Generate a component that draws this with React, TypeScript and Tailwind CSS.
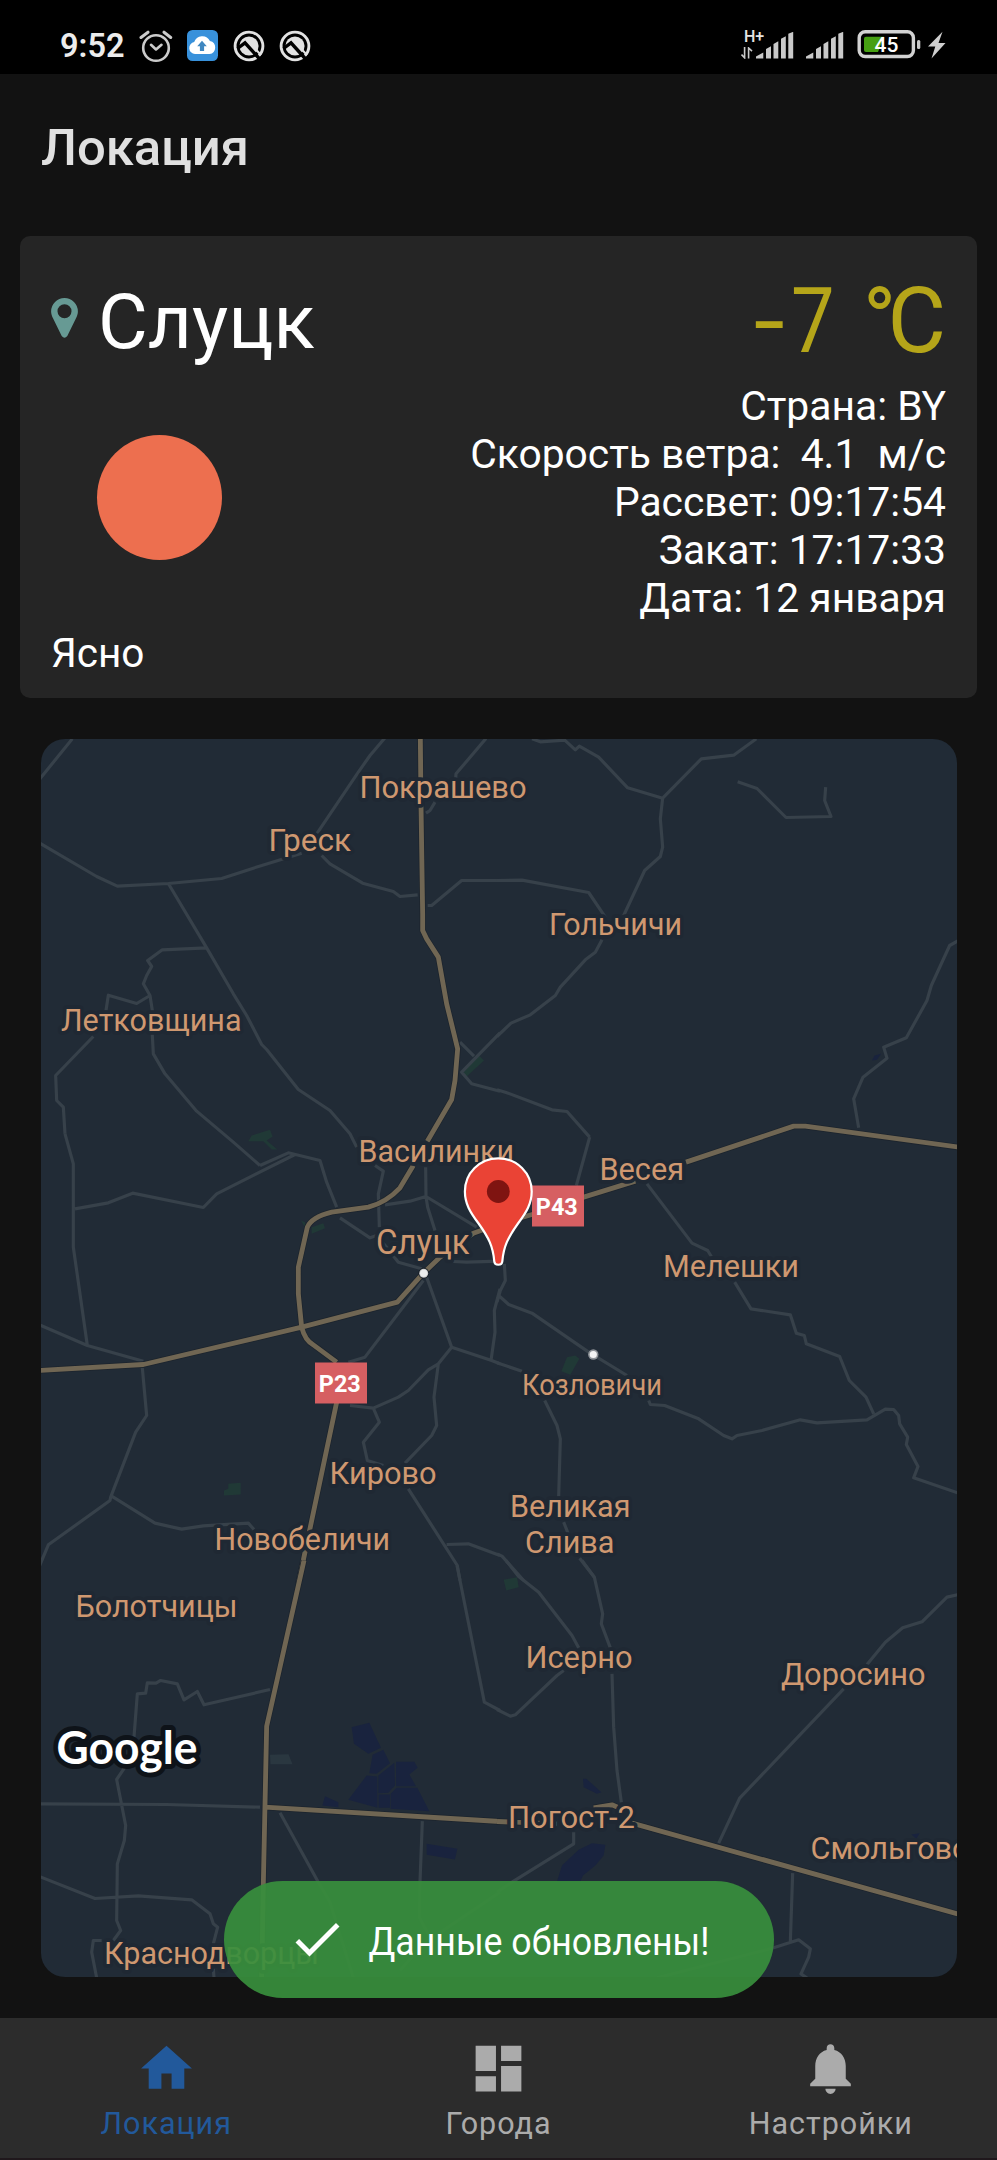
import React from "react";

const BG = "#212b36";

type Tile = {
  x: number;
  y: number;
  roads: string;
  highways?: string;
  parks?: string;
  water?: string;
};

/* Map geometry, split in tiles; each tile uses thirds of a pixel as its unit. */
const TILES: Tile[] = [
  {
    x: 0,
    y: 720,
    roads:
      "M217 55L118 177M118 367L290 468 352 497 505 489 665 474 760 443 905 398 M1155 52L1110 105 1075 155 950 340M965 405L990 430 1088 488 1180 513 1200 528 1253 523M1458 54L1368 160 1365 200M1305 245L1290 270 1278 278M1283 555L1295 555 1385 480 1500 480M505 489L620 682 700 820 740 885 785 972 800 987 895 1107 990 1170 1050 1240 1070 1280M620 682L487 688 443 720 455 738 440 765 430 790 450 825 457 870 457 945 460 1000 495 1060 590 1172 700 1265 780 1335M450 825L410 849 325 824 318 870M280 948L167 1065 170 1140 190 1160 195 1240M1500 937L1385 1055 1415 1090 1500 1112M1380 965L1422 1007",
    highways:
      "M1261 50L1263 250 1268 580 1268 630 1280 655 1315 710 1340 850 1373 985 1365 1080 1355 1137 1282 1262",
    parks:
      "M1435 1003L1452 1020 1400 1068 1390 1055ZM745 1262L755 1245 810 1228 818 1248 800 1260 832 1287 815 1287 790 1262Z",
  },
  {
    x: 497,
    y: 720,
    roads:
      "M105 55L130 64 203 59 235 88 247 77 305 110 392 202 497 233 613 115 710 104 778 55M497 233L490 295 497 380 490 408 443 450 380 585M315 658L295 695 265 718 190 800 175 825 100 883 42 908 0 948M0 480L75 479 275 516 325 590M722 184L780 204 867 291 1002 288 983 240 986 200M1385 660L1358 675 1303 795 1290 840 1228 952 1160 980 1170 1013 1098 1070 1070 1135 1085 1222M0 1108L25 1115 165 1168 210 1173 278 1250",
    highways: "M567 1325L890 1217 925 1217 1385 1280",
    water: "M1125 1020L1133 1005 1152 1000 1140 1018Z",
  },
  {
    x: 0,
    y: 1130,
    roads:
      "M195 10L220 100 220 350 262 645M118 583L262 645 430 692M427 712L440 855 407 905 332 1100 330 1110 145 1243 118 1308M225 235L325 217 398 188 610 231 650 190 885 72M780 105L865 67 960 90 980 155 1010 230M1020 262L1110 322 1130 315 1160 350 1195 395 1265 415M1125 105L1150 122 1135 190 1138 290M1155 223L1230 212 1278 198 1430 290M1277 110L1278 198 1283 230 1305 300M1360 393L1400 395 1500 392M1270 450L1095 680 1045 695M1280 440L1355 650 1475 690 1500 700M1355 650L1315 700 1285 718 1225 780 1195 800 1120 833 1050 825M1120 833L1138 875 1090 935 1102 990 1150 1005M1315 700L1302 800 1310 885 1295 915 1215 998M1500 475L1483 540 1485 605 1473 690M335 1097L465 1178 545 1196 610 1186 745 1178 762 1197M1225 1075L1372 1305 1380 1350M1340 1242L1405 1240 1500 1275",
    highways:
      "M118 720L430 702 905 590 1192 515 1270 428 1320 380 1420 308 1500 280M1240 105L1200 172Q1160 215 1105 230L995 245Q935 260 922 290L895 410 895 490 905 590Q915 630 940 643L1010 695M1010 815L895 1360",
    parks:
      "M903 270L915 275 920 300ZM935 290L970 278 975 293 935 310ZM672 1080L685 1075V1060L722 1057V1092L672 1095Z",
  },
  {
    x: 497,
    y: 1130,
    roads:
      "M278 20L238 165M450 160L585 338 632 360 643 378M713 455L762 535 880 553 898 608 922 615 928 640 1028 678 1057 750 1107 800 1130 850M22 400L25 450 10 480 0 515M5 495L35 522 105 548 275 665 390 735M455 810L460 822 503 825 605 865 680 915 705 925 720 915 795 900 910 868 960 877 1110 868 1165 836 1190 837 1205 855 1208 880 1232 920 1228 942 1263 1008 1250 1042 1385 1088M0 697L75 722M143 810L180 885 190 925 185 1098M200 1175L213 1208M248 1283L292 1340M0 1270L15 1277 80 1350",
    highways: "M0 283L105 252 260 200 415 152",
    parks: "M210 680L235 675 247 685 220 733 193 722Z",
  },
  {
    x: 0,
    y: 1560,
    roads:
      "M1371 15L1453 425 1500 450M810 387L612 433 592 393 552 418 532 370 482 360 468 368 442 367 437 398 412 400 402 530M375 620L350 657 377 795 373 840 352 910 350 1080 362 1110 340 1140M305 1140L280 1140 275 1175 290 1252M118 730L500 732 780 740M118 948L285 1014 415 1006 575 1018 630 1060 640 1090 653 1100 640 1150M640 1225L642 1252M840 757L955 965 990 1025 1060 1252M1267 782L1260 965 1258 1070 1300 1150M1500 995L1270 1150 1200 1230",
    highways: "M912 0L800 497 790 970 785 1252M795 740L1500 783",
    water:
      "M1055 500L1108 487 1143 562 1105 580 1062 550ZM1118 583L1150 568 1170 608 1130 640 1108 638ZM1100 645L1132 648 1132 742 1045 718ZM1135 645L1183 607 1185 675 1165 697 1135 698ZM1188 604H1243L1253 622 1228 642 1248 677 1188 677ZM1190 682H1252L1288 752 1172 745 1172 700ZM1136 702H1170V742H1136ZM975 707L1015 725 1015 740 967 735ZM1280 850L1372 865 1365 897 1280 883Z",
  },
  {
    x: 497,
    y: 1560,
    roads:
      "M27 0L65 48 125 95 225 225 245 262M200 330L180 345 55 463 40 467 0 447M255 0L292 50 317 160 313 190 340 262M345 340L350 500 360 630 373 725M1385 102L1350 110 1275 184 1217 202 1165 245 1110 312M1040 385L728 713 665 848M887 938L880 1145M830 1162L905 1138 940 1165 935 1190 912 1240 932 1254M830 1162L480 1252M230 815L230 850 45 965 0 995",
    highways: "M0 783L180 790M290 742L345 733 362 740M405 788L1385 1061",
    parks: "M20 58L60 50 65 80 28 90Z",
    water:
      "M258 655L268 655 313 695 300 700 260 680ZM180 963L195 915 245 868 285 848 325 853 320 885 295 915 258 945 250 963ZM1243 822L1268 818 1258 835Z",
  },
];

/* text, left edge, right edge, baseline, size */
const LABELS: [string, number, number, number, number][] = [
  ["Покрашево", 361, 525.5, 798.3, 32],
  ["Греск", 270, 350, 851.7, 32],
  ["Гольчичи", 550.5, 681, 935.7, 32],
  ["Летковщина", 62.5, 240.5, 1031.7, 32],
  ["Василинки", 360, 513, 1162.7, 32],
  ["Весея", 601, 683, 1180.3, 32],
  ["Слуцк", 377.5, 468.5, 1254, 34.5],
  ["Мелешки", 664.5, 798, 1277.3, 32],
  ["Козловичи", 523.5, 661, 1395.7, 30],
  ["Кирово", 331, 435.5, 1484, 32],
  ["Новобеличи", 216, 389, 1550.7, 32],
  ["Великая", 511.5, 629.5, 1517.7, 32],
  ["Слива", 526.5, 613.5, 1553.5, 32],
  ["Болотчицы", 77, 236.5, 1617.3, 32],
  ["Исерно", 527, 631.5, 1668.3, 32],
  ["Доросино", 782.5, 924.5, 1685, 32],
  ["Погост-2", 509.5, 634, 1828.3, 32],
  ["Смольгово", 812, 968.5, 1859.3, 32],
  ["Краснодворцы", 105.5, 318, 1964, 32],
];

function RoadShield({ x, y, text }: { x: number; y: number; text: string }) {
  return (
    <g>
      <rect x={x} y={y} width="52" height="41" fill="#d65f62" />
      <text x={x + 3.8} y={y + 29.3} fontSize="24.5" fontWeight="700" fill="#fff" textLength="42" lengthAdjust="spacingAndGlyphs">
        {text}
      </text>
    </g>
  );
}

function CityMap() {
  return (
    <svg viewBox="41 738.5 915.5 1238.5" className="block h-full w-full font-[Roboto,sans-serif]">
      <defs>
        <radialGradient id="dot">
          <stop offset="0.7" stopColor="#ececec" />
          <stop offset="1" stopColor="#b8b8b8" />
        </radialGradient>
      </defs>
      <rect x="41" y="738" width="916" height="1240" fill={BG} />
      <path d="M270 1754.3l18.5-.6 4 10h-22z" fill="#2a3740" />
      {TILES.map((t, i) => (
        <g key={i} transform={`translate(${t.x} ${t.y}) scale(0.33333)`}>
          {t.parks && <path d={t.parks} fill="#203936" />}
          {t.water && <path d={t.water} fill="#19233e" />}
          <path d={t.roads} fill="none" stroke="#37414a" strokeWidth="9.5" strokeLinejoin="round" />
        </g>
      ))}
      {TILES.map((t, i) => (
        <g key={i} transform={`translate(${t.x} ${t.y}) scale(0.33333)`}>
          <path d={t.highways} fill="none" stroke="#1c242d" strokeWidth="19" strokeLinejoin="round" />
          <path d={t.highways} fill="none" stroke="#706653" strokeWidth="14.5" strokeLinejoin="round" />
        </g>
      ))}
      <circle cx="423.7" cy="1272.7" r="5.4" fill="#161d26" />
      <circle cx="423.7" cy="1272.7" r="4.5" fill="url(#dot)" />
      <circle cx="593.3" cy="1354" r="5.2" fill="#8e9297" />
      <circle cx="593.3" cy="1354" r="3.6" fill="#f4f4f4" />
      {LABELS.map(([text, x1, x2, y, size]) => (
        <text
          key={text}
          x={x1 - 1.5}
          y={y - 0.8}
          fontSize={size}
          textLength={x2 - x1 + 2.5}
          lengthAdjust="spacingAndGlyphs"
          fill="#cf9870"
          stroke="#1f2833"
          strokeWidth="7.5"
          strokeLinejoin="round"
          paintOrder="stroke"
        >
          {text}
        </text>
      ))}
      <RoadShield x={315} y={1362} text="P23" />
      <RoadShield x={532} y={1185} text="P43" />
      <path
        d="M498.3 1157.8C517 1157.8 531.7 1172.5 531.7 1191C531.7 1203 526.5 1211.5 518 1223C508 1237 503.5 1246 502.3 1261C502 1265.3 494.6 1265.3 494.3 1261C493.1 1246 488.6 1237 478.6 1223C470 1211.5 464.9 1203 464.9 1191C464.9 1172.5 479.6 1157.8 498.3 1157.8Z"
        fill="#ea4335"
        stroke="#fff"
        strokeWidth="2.2"
      />
      <circle cx="498.3" cy="1191" r="11.4" fill="#7f1411" />
      <text
        x="56.5"
        y="1763"
        fontSize="46"
        fontWeight="700"
        textLength="141"
        lengthAdjust="spacingAndGlyphs"
        fill="#fff"
        stroke="#0e1319"
        strokeWidth="10"
        strokeLinejoin="round"
        paintOrder="stroke"
        className="font-[Lato,sans-serif]"
      >
        Google
      </text>
    </svg>
  );
}

function AlarmIcon() {
  return (
    <svg width="34" height="34" viewBox="139 29 34 34" fill="none" stroke="#cbcbcb" strokeWidth="2.6">
      <circle cx="156" cy="48" r="12.8" />
      <path d="M151 44.8L156 49.5 161.5 44.8" strokeLinecap="round" strokeLinejoin="round" />
      <path d="M141 37.5L148 32.2M164 32.2L170.7 37.5" strokeWidth="3" strokeLinecap="round" />
    </svg>
  );
}

function CloudIcon() {
  return (
    <svg width="31" height="31" viewBox="187 30 31 31">
      <rect x="187" y="30" width="31" height="31" rx="5.5" fill="#3891db" />
      <path d="M195 54a6 6 0 0 1-.8-11.9 8.5 8.5 0 0 1 15.7-1.1A6.6 6.6 0 0 1 209.5 54Z" fill="#fff" />
      <path d="M202 40.7l4.8 5.5h-2.7v4.8h-4.2v-4.8h-2.7z" fill="#3f87c0" />
    </svg>
  );
}

function QIcon() {
  return (
    <svg width="32" height="32" viewBox="0 0 32 32">
      <circle cx="16" cy="16" r="13.9" fill="none" stroke="#e2e2e2" strokeWidth="2.9" />
      <circle cx="16" cy="16" r="9.6" fill="#e2e2e2" />
      <path d="M4.5 18.5L12 12.8 27.5 30" fill="none" stroke="#000" strokeWidth="3.4" />
      <path d="M20 16.500L28 25" stroke="#e2e2e2" strokeWidth="2" />
    </svg>
  );
}

function SignalIcon() {
  return (
    <svg width="38" height="27" viewBox="0 0 38 27" fill="#c9c9c9">
      <path d="M0 26.5V24.5L7.3 20.5V26.5ZM10 26.5V17L15 14.3V26.5ZM17.5 26.5V12L22.3 9.3V26.5ZM25 26.5V6.8L29.8 4.3V26.5ZM32.3 26.5V1.8L37.2-.2V26.5Z" />
    </svg>
  );
}

function StatusBar() {
  return (
    <header className="flex h-[74px] items-start justify-between bg-black pl-[60px] pr-[51px]">
      <div className="flex h-[91px] items-center">
        <span className="w-[79px] pt-px text-[32.5px] font-semibold leading-none text-[#ececec]">9:52</span>
        <AlarmIcon />
        <span className="ml-[14px]"><CloudIcon /></span>
        <span className="ml-[14.5px]"><QIcon /></span>
        <span className="ml-[14px]"><QIcon /></span>
      </div>
      <div className="flex pt-[29px] text-[#c9c9c9]">
        <div className="flex w-[15px] flex-col">
          <span className="ml-[3px] text-[16px] font-medium leading-[15px] text-[#e4e4e4]">H+</span>
          <svg width="12" height="12" viewBox="0 0 12 12" className="mt-[3px]" fill="none" stroke="#c9c9c9" strokeWidth="1.6">
            <path d="M3.6 0V10.8L.5 7.6M7.6 11.5V1L11 4.2" />
          </svg>
        </div>
        <div className="flex pt-[2.5px]">
          <SignalIcon />
          <span className="ml-3"><SignalIcon /></span>
        </div>
        <svg width="64" height="30" viewBox="857 30 64 30" className="ml-[13px]">
          <rect x="859.2" y="32.7" width="54.2" height="24.8" rx="6" fill="none" stroke="#d2d2d2" strokeWidth="3.4" />
          <path d="M866 37.7H884L878 53H866a2 2 0 0 1-2-2V39.7a2 2 0 0 1 2-2Z" fill="#46a012" />
          <rect x="917" y="41" width="3.3" height="9" rx="1.5" fill="#c9c9c9" />
          <text x="874.5" y="53" fontSize="21" fontWeight="500" fill="#fff" className="font-[Roboto,sans-serif]">45</text>
        </svg>
        <svg width="18" height="28" viewBox="0 0 18 28" className="ml-[7px] mt-[2px]" fill="#cfcfcf">
          <path d="M14.5.8L0 15.5H7.3L3.5 27.5 17.5 12H10.5Z" />
        </svg>
      </div>
    </header>
  );
}

function WeatherCard() {
  return (
    <section className="mx-5 mt-[2px] flex h-[462px] justify-between rounded-[10px] bg-[#252525] pl-[31px] pr-[31px]">
      <div className="flex flex-col">
        <div className="flex pt-[40px]">
          <svg width="27" height="40" viewBox="0 0 27 40" className="mt-[22px]">
            <path
              fillRule="evenodd"
              d="M13.5 0A13.4 13.4 0 0 1 26.9 13.4C26.9 16 26 18 25 20.3L16.3 38Q13.5 41.5 10.7 38L2 20.3C1 18 .1 16 .1 13.4A13.4 13.4 0 0 1 13.5 0ZM13.5 6.3a7 7 0 1 0 0 14 7 7 0 1 0 0-14Z"
              fill="#679a94"
            />
          </svg>
          <h2 className="ml-5 text-[76.5px] leading-[92px] text-white">Слуцк</h2>
        </div>
        <div className="ml-[45.5px] mt-[67px] size-[125px] rounded-full bg-[#ed6f4f]" />
        <p className="mt-[69px] text-[40.5px] leading-[48px] text-white">Ясно</p>
      </div>
      <div className="flex flex-col pt-[33px] text-right">
        <p className="flex items-baseline justify-end text-[90px] leading-[106px] text-[#b5a519]">
          <span className="mr-[-1px] inline-block origin-right scale-x-[1.25]">-</span>
          <span className="mr-[28px] inline-block origin-right scale-x-[0.86]">7</span>
          <span>
            <span className="tracking-[-9px]">°</span>C
          </span>
        </p>
        <div className="mt-[7px] whitespace-pre text-[40.8px] leading-[48px] text-white">
          <p>Страна: BY</p>
          <p>{"Скорость ветра:  4.1  м/с"}</p>
          <p>Рассвет: 09:17:54</p>
          <p>Закат: 17:17:33</p>
          <p>Дата: 12 января</p>
        </div>
      </div>
    </section>
  );
}

const NAV = [
  { label: "Локация", color: "text-[#22599b]", d: "M10 20v-6h4v6h5v-8h3L12 3 2 12h3v8z" },
  { label: "Города", color: "text-[#ababab]", d: "M3 13h8V3H3v10zm0 8h8v-6H3v6zm10 0h8V11h-8v10zm0-18v6h8V3h-8z" },
  {
    label: "Настройки",
    color: "text-[#ababab]",
    d: "M12 22c1.1 0 2-.9 2-2h-4c0 1.1.89 2 2 2zm6-6v-5c0-3.07-1.64-5.64-4.5-6.32V4c0-.83-.67-1.5-1.5-1.5s-1.5.67-1.5 1.5v.68C7.63 5.36 6 7.92 6 11v5l-2 2v1h16v-1l-2-2z",
  },
];

function BottomNav() {
  return (
    <nav className="grid h-[142px] grid-cols-3 border-b-2 border-[#1f181c] bg-[#2c2c2c]">
      {NAV.map((n) => (
        <div key={n.label} className={`flex flex-col items-center pt-[20px] ${n.color}`}>
          <svg width="61" height="61" viewBox="0 0 24 24" fill="currentColor">
            <path d={n.d} />
          </svg>
          <span className="mt-[7px] text-[30.5px] leading-9 tracking-[1px]">{n.label}</span>
        </div>
      ))}
    </nav>
  );
}

export default function App() {
  return (
    <div className="relative flex h-[2160px] w-[997px] flex-col overflow-hidden bg-[#121212] font-[Roboto,sans-serif]">
      <StatusBar />
      <div className="flex h-[160px] items-start pl-[41px] pt-[44px]">
        <h1 className="text-[50.8px] font-medium leading-[60px] text-[#e0e0e0]">Локация</h1>
      </div>
      <WeatherCard />
      <main className="ml-[41px] mt-[40.5px] h-[1238.5px] w-[915.5px] overflow-hidden rounded-[24px]">
        <CityMap />
      </main>
      <div className="flex-1" />
      <BottomNav />
      <div className="absolute left-[223.5px] top-[1881px] flex h-[116.5px] w-[550px] items-center rounded-full bg-[#388e3c]/93 pl-[63px]">
        <svg width="60" height="60" viewBox="0 0 24 24" fill="#fff">
          <path d="M9 16.17L4.83 12l-1.42 1.41L9 19 21 7l-1.41-1.41z" />
        </svg>
        <svg width="360" height="60" viewBox="0 0 360 60" className="ml-[21px]">
          <text x="0.5" y="46.2" fontSize="39.5" fill="#fff" textLength="341" lengthAdjust="spacingAndGlyphs">
            Данные обновлены!
          </text>
        </svg>
      </div>
    </div>
  );
}
